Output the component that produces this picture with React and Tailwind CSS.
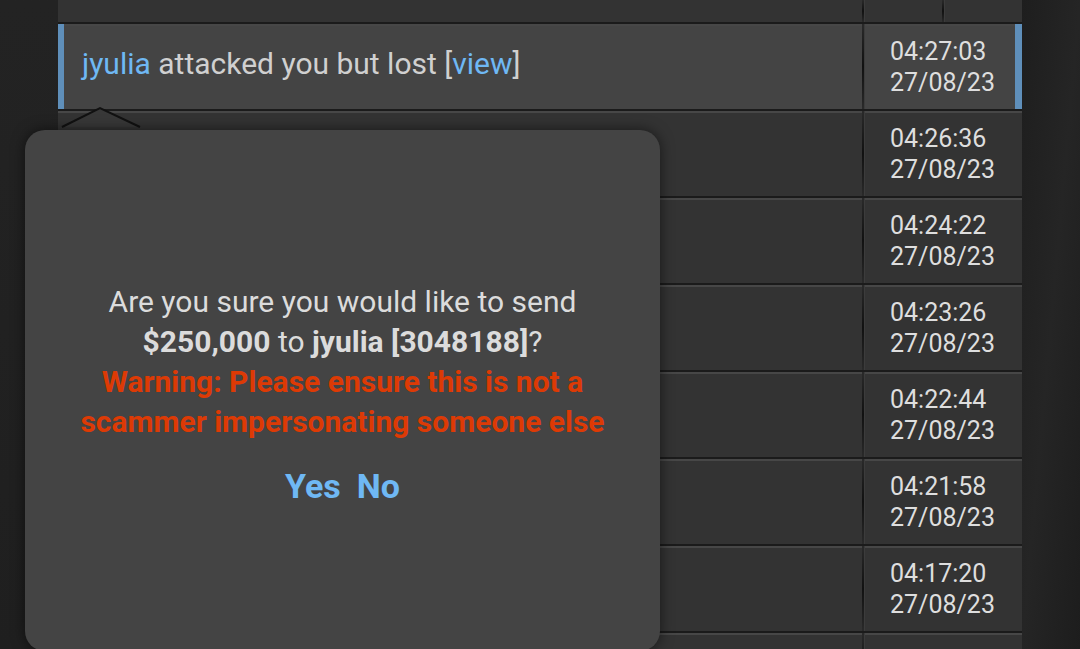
import React from 'react';

const rows = [
  { time: '04:27:03', date: '27/08/23', active: true },
  { time: '04:26:36', date: '27/08/23' },
  { time: '04:24:22', date: '27/08/23' },
  { time: '04:23:26', date: '27/08/23' },
  { time: '04:22:44', date: '27/08/23' },
  { time: '04:21:58', date: '27/08/23' },
  { time: '04:17:20', date: '27/08/23' },
  { time: '', date: '' },
];

function Divider() {
  return (
    <div className="flex h-full shrink-0">
      <div className="w-[2px] h-full bg-gradient-to-b from-[#2a2a2a] via-[#111] to-[#2a2a2a]" />
      <div className="w-px h-full bg-[#3c3c3c]" />
    </div>
  );
}

function Row({ row }) {
  const bg = row.active ? 'bg-[#444]' : 'bg-[#333]';
  return (
    <div className={`flex shrink-0 h-[87px] ${bg} border-t-[2px] border-t-[#1b1b1b] shadow-[inset_0_2px_0_#474747]`}>
      <div className={`flex-1 flex items-center pb-[6px] ${row.active ? 'pl-[18px] border-l-[6px] border-l-[#5f8fba]' : 'pl-[24px]'}`}>
        {row.active && (
          <span className="text-[30px] text-[#d0d0d0]">
            <span className="text-[#6fb8f4]">jyulia</span> attacked you but lost [<span className="text-[#6fb8f4]">view</span>]
          </span>
        )}
      </div>
      <Divider />
      <div className={`w-[157px] flex flex-col justify-center pl-[25px] pt-[1px] text-[25px] leading-[31px] text-[#dedede] ${row.active ? 'border-r-[7px] border-r-[#5f8fba]' : 'pr-[7px]'}`}>
        <div>{row.time}</div>
        <div>{row.date}</div>
      </div>
    </div>
  );
}

export default function App() {
  return (
    <div className="w-[1080px] h-[649px] overflow-hidden bg-[#222] flex relative" style={{ fontFamily: 'Roboto, "Liberation Sans", sans-serif' }}>
      <div className="w-[58px] shrink-0 bg-gradient-to-b from-[#232323] to-[#1f1f1f]" />
      <div className="w-[964px] shrink-0 flex flex-col">
        <div className="h-[22px] shrink-0 flex bg-[#333]">
          <div className="flex-1" />
          <Divider />
          <div className="w-[77px]" />
          <Divider />
          <div className="w-[77px]" />
        </div>
        {rows.map((row, i) => (
          <Row key={i} row={row} />
        ))}
      </div>
      <div className="flex-1 bg-gradient-to-br from-[#1e1e1e] via-[#252525] to-[#1d1d1d]" />

      <svg className="absolute left-[58px] top-[104px]" width="90" height="28" viewBox="0 0 90 28">
        <path d="M4 23 L42 4 L82 23" fill="#383838" stroke="#111" strokeWidth="2" />
      </svg>

      <div className="absolute left-[25px] top-[130px] w-[635px] h-[521px] pt-[13px] bg-[#444] rounded-[20px] shadow-[0_0_14px_rgba(0,0,0,0.55)] flex flex-col items-center justify-center text-center">
        <div className="text-[30px] leading-[40px] text-[#dcdcdc]">
          <div>Are you sure you would like to send</div>
          <div>
            <b className="font-bold">$250,000</b> to <b className="font-bold">jyulia [3048188]</b>?
          </div>
          <div className="font-bold text-[#dd3a05]">
            Warning: Please ensure this is not a<br />scammer impersonating someone else
          </div>
        </div>
        <div className="mt-[19px] flex gap-[16px] text-[34px] font-bold text-[#6fb8f4]">
          <span>Yes</span>
          <span>No</span>
        </div>
      </div>
    </div>
  );
}
